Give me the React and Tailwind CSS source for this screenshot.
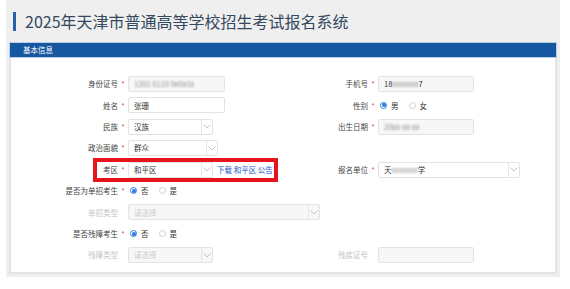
import React from 'react';

const Chevron = () => (
  <svg width="8" height="5" viewBox="0 0 8 5" className="block">
    <polyline points="0.5,0.5 4,4 7.5,0.5" fill="none" stroke="#b5b5b5" strokeWidth="0.8" />
  </svg>
);

const Radio = ({ checked }) =>
  checked ? (
    <span className="block w-[7px] h-[7px] rounded-full border border-[#2f7be0] flex items-center justify-center shrink-0">
      <span className="block w-[4px] h-[4px] rounded-full bg-[#2f7be0]" />
    </span>
  ) : (
    <span className="block w-[7px] h-[7px] rounded-full border border-[#cfcfcf] bg-white shrink-0" />
  );

const Label = ({ text, width, required = true, disabled = false }) => (
  <div className="flex items-center shrink-0">
    <span
      className={`text-right ${disabled ? 'text-[#c4c4c4] pl-[4px]' : 'text-[#444]'}`}
      style={{ width }}
    >
      {text}
    </span>
    <span className="w-[10px] text-center text-[#e04848]">{required ? '*' : ''}</span>
  </div>
);

const Input = ({ children, width, readonly = false, disabled = false }) => (
  <div
    className={`h-[16px] flex items-center px-[5px] border border-[#e3e3e3] rounded-[2px] text-[#333] ${
      readonly || disabled ? 'bg-[#f7f7f7]' : 'bg-white'
    }`}
    style={{ width }}
  >
    {children}
  </div>
);

const Select = ({ value, width, disabled = false }) => (
  <div
    className={`h-[16px] flex items-center border border-[#e3e3e3] rounded-[2px] ${
      disabled ? 'bg-[#f7f7f7]' : 'bg-white'
    }`}
    style={{ width }}
  >
    <span className={`flex-1 pl-[5px] ${disabled ? 'text-[#cfcfcf]' : 'text-[#333]'}`}>{value}</span>
    <span className="w-[11px] h-full border-l border-[#e6e6e6] flex items-center justify-center">
      <Chevron />
    </span>
  </div>
);

const Blur = ({ children }) => <span className="blur-[1px] text-[#8a8a8a]">{children}</span>;

const RadioPair = ({ a, b }) => (
  <div className="flex items-center gap-[4px] pl-[2px] text-[#333]">
    <Radio checked />
    <span>{a}</span>
    <span className="ml-[6px] flex">
      <Radio />
    </span>
    <span>{b}</span>
  </div>
);

const LEFT = 107;
const RIGHT = 87;

const Row = ({ left, right }) => (
  <div className="flex h-[16px] items-center">
    <div className="w-[270px] shrink-0 flex items-center relative">{left}</div>
    <div className="flex items-center">{right}</div>
  </div>
);

const App = () => {
  return (
    <div className="w-[570px] h-[289px] bg-white font-['Noto_Sans_CJK_SC','Noto_Sans',sans-serif] text-[7.5px] leading-none">
      <div className="ml-[6px] w-[554px] h-[277px] bg-[#efefef] pt-[12px] px-[3px]">
        <div className="flex items-center h-[19px]">
          <span className="ml-[4px] w-[3px] h-[19px] bg-[#2a62a8]" />
          <h1 className="ml-[9px] text-[16px] leading-[19px] text-[#34495e]">
            2025年天津市普通高等学校招生考试报名系统
          </h1>
        </div>

        <div className="mt-[11px] w-[548px]">
          <div className="h-[16px] bg-[#1657a2] border border-[#b9cfe8] flex items-center px-[13px] text-white">
            基本信息
          </div>
          <div className="h-[216px] bg-white border-2 border-t-0 border-[#e4e4e4] pt-[18px] flex flex-col gap-[5.4px]">
            <Row
              left={
                <>
                  <Label text="身份证号" width={LEFT} />
                  <Input width={97} readonly>
                    <Blur>1201 0119 9x0x1x</Blur>
                  </Input>
                </>
              }
              right={
                <>
                  <Label text="手机号" width={RIGHT} />
                  <Input width={96} readonly>
                    18<Blur>xxxxxxx</Blur>7
                  </Input>
                </>
              }
            />
            <Row
              left={
                <>
                  <Label text="姓名" width={LEFT} />
                  <Input width={97}>张珊</Input>
                </>
              }
              right={
                <>
                  <Label text="性别" width={RIGHT} />
                  <RadioPair a="男" b="女" />
                </>
              }
            />
            <Row
              left={
                <>
                  <Label text="民族" width={LEFT} />
                  <Select value="汉族" width={85} />
                </>
              }
              right={
                <>
                  <Label text="出生日期" width={RIGHT} />
                  <Input width={96} readonly>
                    <Blur>20xx-xx-xx</Blur>
                  </Input>
                </>
              }
            />
            <Row
              left={
                <>
                  <Label text="政治面貌" width={LEFT} />
                  <Select value="群众" width={90} />
                </>
              }
            />
            <Row
              left={
                <>
                  <Label text="考区" width={LEFT} />
                  <Select value="和平区" width={85} />
                  <span className="ml-[4px] text-[#2255cc] whitespace-nowrap">下载 和平区 公告</span>
                  <div className="absolute left-[82px] top-[-4px] w-[185px] h-[24px] border-4 border-[#e5141d]" />
                </>
              }
              right={
                <>
                  <Label text="报名单位" width={RIGHT} />
                  <Select
                    value={
                      <>
                        天<Blur>xxxxxxx</Blur>学
                      </>
                    }
                    width={142}
                  />
                </>
              }
            />
            <Row
              left={
                <>
                  <Label text="是否为单招考生" width={LEFT} />
                  <RadioPair a="否" b="是" />
                </>
              }
            />
            <Row
              left={
                <>
                  <Label text="单招类型" width={LEFT} required={false} disabled />
                  <div className="w-0 overflow-visible">
                    <Select value="请选择" width={192} disabled />
                  </div>
                </>
              }
            />
            <Row
              left={
                <>
                  <Label text="是否残障考生" width={LEFT} />
                  <RadioPair a="否" b="是" />
                </>
              }
            />
            <Row
              left={
                <>
                  <Label text="残障类型" width={LEFT} required={false} disabled />
                  <Select value="请选择" width={85} disabled />
                </>
              }
              right={
                <>
                  <Label text="残疾证号" width={RIGHT} required={false} disabled />
                  <Input width={96} disabled />
                </>
              }
            />
          </div>
        </div>
      </div>
    </div>
  );
};

export default App;
